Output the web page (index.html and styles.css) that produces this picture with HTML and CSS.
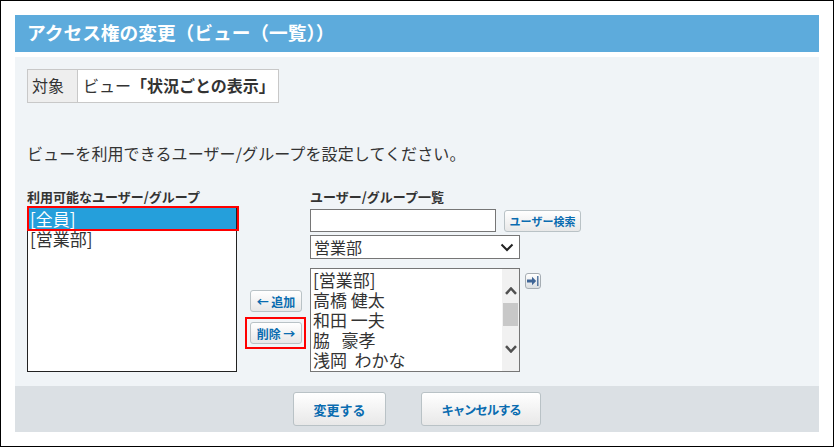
FILE: index.html
```html
<!DOCTYPE html>
<html lang="ja">
<head>
<meta charset="utf-8">
<title>アクセス権の変更</title>
<link rel="stylesheet" href="styles.css">
</head>
<body>
<div class="frame">
  <h1 class="title">アクセス権の変更（ビュー（一覧））</h1>
  <main class="content">
    <div class="target">
      <div class="target-label">対象</div>
      <div class="target-value">ビュー<b>「状況ごとの表示」</b></div>
    </div>
    <p class="lead">ビューを利用できるユーザー/グループを設定してください。</p>
    <div class="picker">
      <section class="col-left">
        <div class="col-label">利用可能なユーザー/グループ</div>
        <div class="listbox left-list">
          <div class="opt selected">[全員]</div>
          <div class="opt">[営業部]</div>
          <span class="mark mark-row"></span>
        </div>
      </section>
      <div class="col-mid">
        <button class="btn small add">← 追加</button>
        <button class="btn small del">削除 →</button>
        <span class="mark mark-del"></span>
      </div>
      <section class="col-right">
        <div class="col-label">ユーザー/グループ一覧</div>
        <div class="search-row">
          <input class="search" type="text">
          <button class="btn small search-btn">ユーザー検索</button>
        </div>
        <div class="select">
          <span>営業部</span>
          <svg class="chev" width="14" height="9" viewBox="0 0 14 9"><path d="M1.500 1.500 7 7l5.500-5.500" fill="none" stroke="#222" stroke-width="2"/></svg>
        </div>
        <div class="list-row">
          <div class="listbox right-list">
            <div class="items">
              <div class="opt">[営業部]</div>
              <div class="opt">高橋 健太</div>
              <div class="opt">和田 一夫</div>
              <div class="opt">脇&nbsp;&nbsp;&nbsp;豪孝</div>
              <div class="opt">浅岡&nbsp;&nbsp;わかな</div>
            </div>
            <div class="scrollbar">
              <svg class="sb-up" width="12" height="8" viewBox="0 0 12 8"><path d="M1 6.800 6 1.500l5 5.300" fill="none" stroke="#505050" stroke-width="2.500"/></svg>
              <div class="thumb"></div>
              <svg class="sb-down" width="12" height="8" viewBox="0 0 12 8"><path d="M1 1.200 6 6.500l5-5.300" fill="none" stroke="#505050" stroke-width="2.500"/></svg>
            </div>
          </div>
          <button class="btn icon-btn">
            <svg width="12" height="10" viewBox="0 0 12 10"><path d="M0 5h7" stroke="#3f6596" stroke-width="3"/><path d="M5 0.800 9.200 5 5 9.200z" fill="#3f6596"/><path d="M10.800 0v10" stroke="#3f6596" stroke-width="1.300"/></svg>
          </button>
        </div>
      </section>
    </div>
  </main>
  <footer class="footer">
    <button class="btn big save">変更する</button>
    <button class="btn big cancel">キャンセルする</button>
  </footer>
</div>
</body>
</html>
```
FILE: styles.css
```css
* { box-sizing: border-box; }
html, body { margin: 0; padding: 0; }
body {
  width: 834px;
  height: 447px;
  overflow: hidden;
  background: #fff;
  color: #333;
  font-family: "Noto Sans CJK JP", "Liberation Sans", sans-serif;
}
.frame {
  width: 834px;
  height: 447px;
  border: 1px solid #000;
  padding: 14px 14px 0;
  display: flex;
  flex-direction: column;
}
.title {
  margin: 0;
  height: 37px;
  line-height: 34px;
  padding-left: 12px;
  background: #5dabdc;
  color: #fff;
  font-size: 18.700px;
  font-weight: 700;
  white-space: nowrap;
}
.content {
  margin-top: 5px;
  height: 329px;
  background: #f0f4f7;
  padding: 12px 12px 0;
}
.target {
  display: flex;
  width: 252px;
  height: 34px;
  border: 1px solid #c8c8c8;
  background: #fff;
  font-size: 16px;
  line-height: 31px;
}
.target-label {
  width: 50px;
  padding-left: 4px;
  background: #eee;
  border-right: 1px solid #c8c8c8;
  white-space: nowrap;
}
.target-value { padding-left: 5px; white-space: nowrap; }
.target-value b { font-weight: 700; }
.lead {
  margin: 38px 0 0;
  font-size: 16px;
  line-height: 24px;
  letter-spacing: 0.100px;
  white-space: nowrap;
}
.picker {
  display: flex;
  margin-top: 23px;
}
.col-left { width: 210px; flex: none; }
.col-label {
  font-size: 13px;
  font-weight: 700;
  line-height: 18px;
  height: 19px;
  white-space: nowrap;
}
.listbox {
  background: #fff;
  font-size: 17px;
  line-height: 20px;
  position: relative;
}
.left-list {
  height: 165px;
  border: 1px solid #222;
}
.opt {
  padding-left: 2px;
  height: 20px;
  white-space: nowrap;
  color: #333;
}
.left-list .opt:first-child { height: 21px; padding-top: 1px; }
.left-list .selected { background: #259fdb; color: #fff; }
.mark {
  position: absolute;
  border: 2px solid #f00;
  pointer-events: none;
}
.mark-row { left: -1px; top: -2px; width: 212px; height: 25px; }
.col-mid {
  position: relative;
  width: 73px;
  flex: none;
  padding: 102px 0 0 13px;
  display: flex;
  flex-direction: column;
  align-items: flex-start;
  gap: 10px;
}
.mark-del { left: 8px; top: 129px; width: 61px; height: 32px; }
.btn {
  padding: 0;
  border: 1px solid #b9c2c6;
  border-radius: 3px;
  background: linear-gradient(#fff, #e8e8e8);
  color: #0a6cb0;
  font-family: inherit;
  font-weight: 700;
  white-space: nowrap;
  display: flex;
  align-items: center;
  justify-content: center;
}
.small { height: 22px; font-size: 12px; }
.add, .del { width: 52px; }
.col-right { width: 280px; flex: none; }
.search-row {
  display: flex;
  align-items: center;
  gap: 8px;
  height: 23px;
  margin-top: 2px;
}
.search {
  width: 186px;
  height: 23px;
  border: 1px solid #767676;
  background: #fff;
  padding: 0;
}
.search-btn { width: 77px; font-size: 11px; }
.select {
  width: 210px;
  height: 24px;
  margin-top: 3px;
  border: 1px solid #767676;
  background: #fff;
  font-size: 16px;
  line-height: 22px;
  padding: 0 4px 0 3px;
  display: flex;
  justify-content: space-between;
  align-items: center;
}
.chev { margin-right: 1px; }
.list-row {
  display: flex;
  align-items: flex-start;
  gap: 5px;
  margin-top: 9px;
}
.right-list {
  width: 210px;
  height: 104px;
  border: 1px solid #767676;
  display: flex;
  overflow: hidden;
}
.items { flex: 1; padding: 1px 0 0; }
.scrollbar {
  width: 17px;
  background: #f1f1f1;
  flex: none;
  position: relative;
}
.sb-up { position: absolute; left: 3px; top: 18px; }
.sb-down { position: absolute; left: 3px; top: 76px; }
.thumb {
  position: absolute;
  left: 1px;
  top: 34px;
  width: 15px;
  height: 23px;
  background: #c8c8c8;
}
.icon-btn {
  width: 16px;
  height: 16px;
  margin-top: 5px;
  border-color: #a6adb3;
  background: linear-gradient(#fff, #dcdfe2);
}
.footer {
  height: 46px;
  background: #dbe0e4;
  display: flex;
  gap: 35px;
  padding: 6px 0 0 278px;
}
.big {
  height: 34px;
  font-size: 13px;
}
.save { width: 93px; }
.cancel { width: 120px; font-size: 12.500px; letter-spacing: -1.200px; }
```
